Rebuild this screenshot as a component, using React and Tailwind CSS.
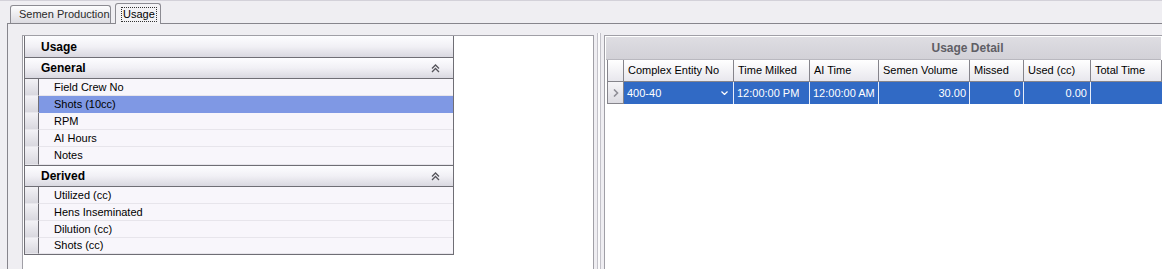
import React from "react";

function Collapse() {
  return (
    <svg width="9" height="9" viewBox="0 0 9 9" className="block">
      <path d="M1 4.5 L4.5 1 L8 4.5" fill="none" stroke="#55545b" strokeWidth="1.3" />
      <path d="M1 8 L4.5 4.5 L8 8" fill="none" stroke="#55545b" strokeWidth="1.3" />
    </svg>
  );
}

function CatHeader({ label, icon, top = true }) {
  return (
    <div
      className={`h-[21px] flex items-center justify-between pl-[16px] pr-[13px] bg-gradient-to-b from-[#fdfdff] via-[#f1f0f5] to-[#d9d8e0] font-bold text-[12px] text-black ${
        top ? "border-t border-[#6f6e75]" : ""
      }`}
    >
      <span>{label}</span>
      {icon && <Collapse />}
    </div>
  );
}

function Item({ label, selected, h = "h-[17px]" }) {
  return (
    <div className={`flex ${h}`}>
      <div className="w-[14px] border-r border-[#6f6e75] bg-gradient-to-b from-[#f3f2f6] to-[#d9d8df] border-b border-b-[#e8e7ec]" />
      <div
        className={`flex-1 flex items-center pl-[15px] border-b ${
          selected ? "bg-[#7f98e4] border-[#7f98e4]" : "bg-[#f8f6fb] border-[#e7e5eb]"
        }`}
      >
        {label}
      </div>
    </div>
  );
}

const cols = [
  { name: "Complex Entity No", w: "w-[110px]" },
  { name: "Time Milked", w: "w-[76px]" },
  { name: "AI Time", w: "w-[69px]" },
  { name: "Semen Volume", w: "w-[91px]" },
  { name: "Missed", w: "w-[54px]" },
  { name: "Used (cc)", w: "w-[67px]" },
  { name: "Total Time", w: "w-[71px]" },
];

export default function App() {
  return (
    <div className="w-[1162px] h-[269px] overflow-hidden bg-[#efeef2] flex flex-col font-['Liberation_Sans',Arial,sans-serif] text-[11px] text-black leading-none">
      <div className="h-px bg-[#d3d1d9] shrink-0" />
      {/* Tab strip */}
      <div className="h-[22px] shrink-0 flex items-end pl-[10px]">
        <div className="h-[18px] w-[101px] border border-b-0 border-[#8c8b92] rounded-t-[3px] bg-gradient-to-b from-[#fdfdfe] to-[#dcdbe1] flex items-center pl-[8px] text-[#2a2a2a]">
          Semen Production
        </div>
        <div className="relative z-10 ml-[4px] -mb-px h-[21px] w-[46px] border border-b-0 border-[#8c8b92] rounded-t-[3px] bg-[#f3f2f5] flex items-start pt-[4px] pl-[6px]">
          <span className="outline outline-1 outline-dotted outline-[#333] px-[1px] py-[1px]">Usage</span>
        </div>
      </div>
      {/* Content */}
      <div className="flex-1 ml-[7px] border-t border-l border-[#86858c] flex pt-[11px] pl-[14px] min-h-0">
        {/* Left panel */}
        <div className="w-[572px] shrink-0 border-t border-l border-r border-[#a09fa6] bg-white pl-[1px]">
          <div className="w-[430px] border-l border-r border-b border-[#6f6e75]">
            <CatHeader label="Usage" top={false} />
            <CatHeader label="General" icon />
            <div className="border-t border-[#6f6e75]">
              <Item label="Field Crew No" />
              <Item label="Shots (10cc)" selected />
              <Item label="RPM" />
              <Item label="AI Hours" />
              <Item label="Notes" h="h-[18px]" />
            </div>
            <CatHeader label="Derived" icon />
            <div className="border-t border-[#6f6e75]">
              <Item label="Utilized (cc)" />
              <Item label="Hens Inseminated" />
              <Item label="Dilution (cc)" />
              <Item label="Shots (cc)" h="h-[16px]" />
            </div>
          </div>
        </div>
        {/* Splitter */}
        <div className="w-[10px] shrink-0 flex -mt-[2px]">
          <div className="w-[3px]" />
          <div className="w-px bg-[#c3c2c9]" />
          <div className="w-[2px] bg-[#fbfbfc]" />
          <div className="w-px bg-[#c3c2c9]" />
        </div>
        {/* Right panel */}
        <div className="flex-1 border-t border-l border-[#a09fa6] bg-white p-[1px] min-w-0">
          <div className="h-[23px] border-b border-[#b9b8bf] bg-gradient-to-b from-[#dedde2] to-[#d2d1d7] flex items-center justify-center font-bold text-[12px] text-[#5f5e65]">
            <span className="pl-[168px]">Usage Detail</span>
          </div>
          <div className="pl-[1px]">
            {/* Header row */}
            <div className="flex h-[22px]">
              <div className="w-[17px] shrink-0 border-l border-r border-b border-[#85848b] bg-gradient-to-b from-white to-[#e8e7ed]" />
              {cols.map((c) => (
                <div
                  key={c.name}
                  className={`${c.w} shrink-0 border-r border-b border-[#85848b] bg-gradient-to-b from-white to-[#e8e7ed] flex items-center pl-[4px] whitespace-nowrap`}
                >
                  {c.name}
                </div>
              ))}
            </div>
            {/* Data row */}
            <div className="flex h-[22px] text-white">
              <div className="w-[17px] shrink-0 border-l border-r border-b border-[#85848b] bg-gradient-to-b from-[#f6f5f8] to-[#dddce2] flex items-center justify-center">
                <svg width="6" height="8" viewBox="0 0 6 8">
                  <path d="M1 0.5 L4.5 4 L1 7.5" fill="none" stroke="#8f8e96" strokeWidth="1.6" />
                </svg>
              </div>
              <div className="w-[110px] shrink-0 bg-[#316ac5] border-r border-[#e8eef9] flex items-center justify-between pl-[3px] pr-[5px]">
                <span>400-40</span>
                <svg width="7" height="4" viewBox="0 0 7 4">
                  <path d="M0.5 0.5 L3.5 3.5 L6.5 0.5" fill="none" stroke="#ffffff" strokeWidth="1.2" />
                </svg>
              </div>
              <div className="w-[76px] shrink-0 bg-[#316ac5] border-r border-[#e8eef9] flex items-center pl-[3px]">12:00:00 PM</div>
              <div className="w-[69px] shrink-0 bg-[#316ac5] border-r border-[#e8eef9] flex items-center pl-[3px]">12:00:00 AM</div>
              <div className="w-[91px] shrink-0 bg-[#316ac5] border-r border-[#e8eef9] flex items-center justify-end pr-[3px]">30.00</div>
              <div className="w-[54px] shrink-0 bg-[#316ac5] border-r border-[#e8eef9] flex items-center justify-end pr-[3px]">0</div>
              <div className="w-[67px] shrink-0 bg-[#316ac5] border-r border-[#e8eef9] flex items-center justify-end pr-[3px]">0.00</div>
              <div className="w-[71px] shrink-0 bg-[#316ac5] flex items-center" />
            </div>
          </div>
        </div>
      </div>
    </div>
  );
}
